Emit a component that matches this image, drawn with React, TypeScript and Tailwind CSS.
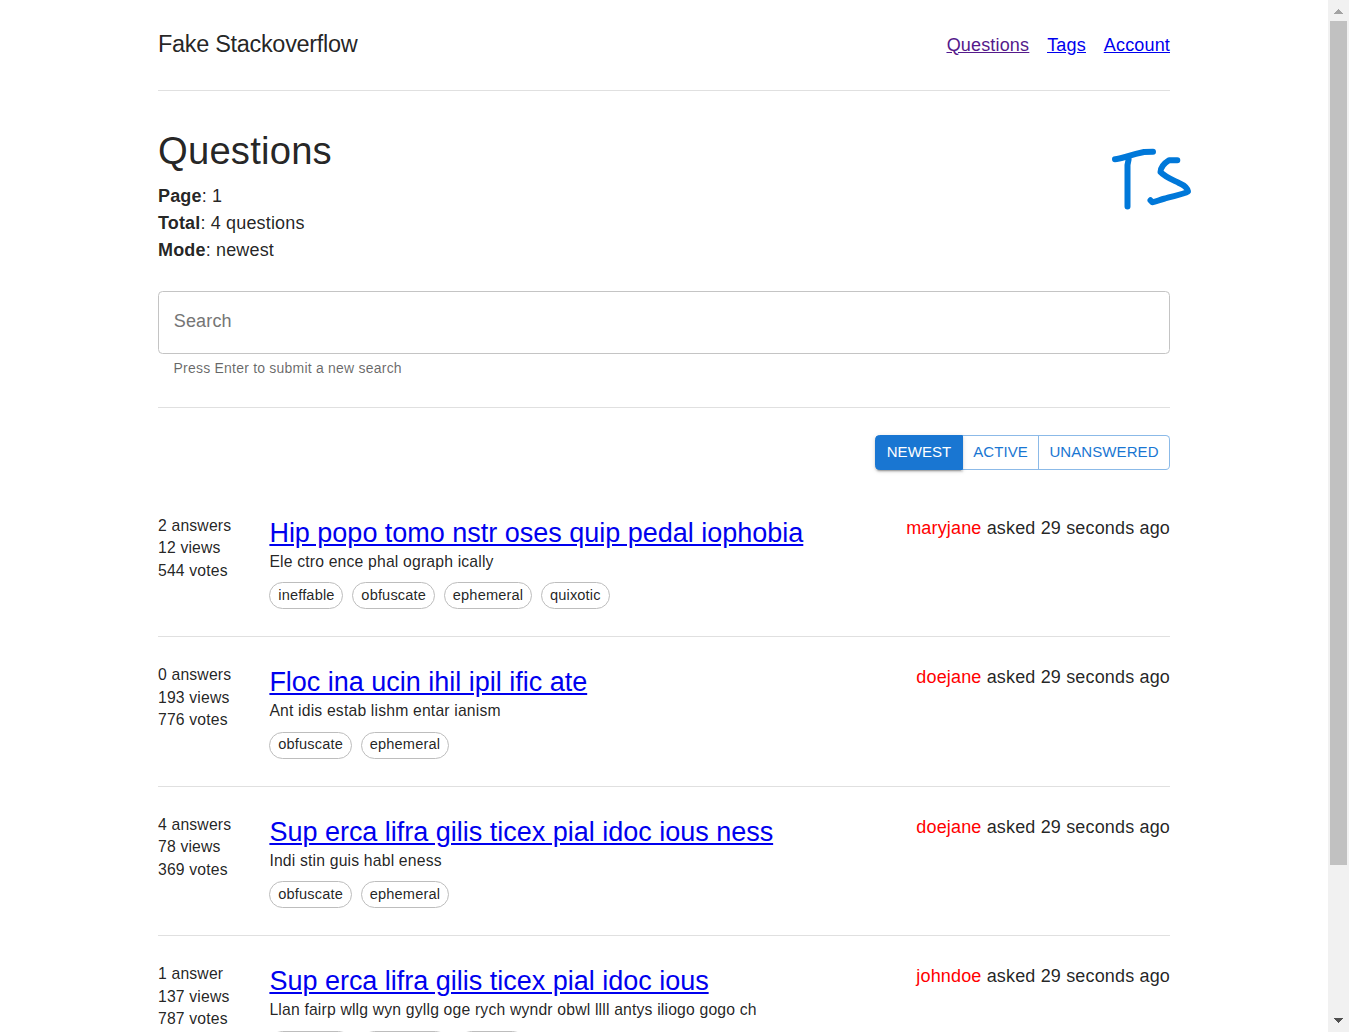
type Question = {
  stats: string[];
  title: string;
  teaser: string;
  tags: string[];
  author: string;
};

const questions: Question[] = [
  {
    stats: ["2 answers", "12 views", "544 votes"],
    title: "Hip popo tomo nstr oses quip pedal iophobia",
    teaser: "Ele ctro ence phal ograph ically",
    tags: ["ineffable", "obfuscate", "ephemeral", "quixotic"],
    author: "maryjane",
  },
  {
    stats: ["0 answers", "193 views", "776 votes"],
    title: "Floc ina ucin ihil ipil ific ate",
    teaser: "Ant idis estab lishm entar ianism",
    tags: ["obfuscate", "ephemeral"],
    author: "doejane",
  },
  {
    stats: ["4 answers", "78 views", "369 votes"],
    title: "Sup erca lifra gilis ticex pial idoc ious ness",
    teaser: "Indi stin guis habl eness",
    tags: ["obfuscate", "ephemeral"],
    author: "doejane",
  },
  {
    stats: ["1 answer", "137 views", "787 votes"],
    title: "Sup erca lifra gilis ticex pial idoc ious",
    teaser: "Llan fairp wllg wyn gyllg oge rych wyndr obwl llll antys iliogo gogo ch",
    tags: ["obfuscate", "ephemeral", "quixotic"],
    author: "johndoe",
  },
];

function Header() {
  return (
    <header className="flex h-[91px] items-center justify-between border-b border-black/12">
      <div className="pb-[3px] text-[23.5px] leading-[36px] tracking-[-0.0135em]">Fake Stackoverflow</div>
      <nav className="flex gap-[18px] text-[#0000ee] underline">
        <a href="#" className="text-[#551a8b]">Questions</a>
        <a href="#">Tags</a>
        <a href="#">Account</a>
      </nav>
    </header>
  );
}

function Meta({ label, value }: { label: string; value: string }) {
  return (
    <div>
      <b>{label}</b>: {value}
    </div>
  );
}

function Logo() {
  return (
    <svg
      viewBox="0 0 90 70"
      className="absolute top-[145px] left-[1107px] h-[70px] w-[90px]"
      fill="none"
      stroke="#0078d9"
      strokeWidth="6"
      strokeLinecap="round"
      strokeLinejoin="round"
    >
      <path d="M8 14.2C14 14 22 10 37 7L46 6.8" />
      <path d="M21.6 14.5L20.5 20V61.5" />
      <path d="M70.3 15.2H62C57.5 18 53.7 21 53.5 27C58 32 66 35 72 38C77 40.2 80.5 43 81 46.5C76 49.5 67 50.8 58 53.5C53 54.5 49 57 45.5 57.2L43.5 55.3" />
    </svg>
  );
}

function QuestionRow({ q }: { q: Question }) {
  return (
    <article className="mb-[27px] flex h-[122.5px] items-start border-b border-black/12">
      <div className="w-[111.4px] shrink-0 text-[15.75px] leading-[22.5px] tracking-[0.01071em]">
        {q.stats.map((s) => (
          <div key={s}>{s}</div>
        ))}
      </div>
      <div className="min-w-0 flex-1">
        <h2 className="text-[27px] leading-[36px] tracking-[-0.0004em]">
          <a href="#" className="text-[#0000ee] underline">{q.title}</a>
        </h2>
        <p className="text-[15.75px] leading-[22.5px] tracking-[0.01071em]">{q.teaser}</p>
        <div className="mt-[9px] flex gap-[9px]">
          {q.tags.map((t) => (
            <span
              key={t}
              className="flex h-[27px] items-center rounded-full border border-[#bdbdbd] px-[7.9px] pb-px text-[14.625px] tracking-[0.01em]"
            >
              {t}
            </span>
          ))}
        </div>
      </div>
      <div>
        <span className="text-[#ff0000]">{q.author}</span> asked 29 seconds ago
      </div>
    </article>
  );
}

function Scrollbar() {
  return (
    <div className="flex w-[21px] shrink-0 flex-col items-center bg-[#f1f1f1]">
      <div className="flex h-[21px] items-center justify-center pt-[2px]">
        <svg width="9" height="5" fill="#a3a3a3" shapeRendering="crispEdges">
          <path d="M0 5L4.5 0L9 5Z" />
        </svg>
      </div>
      <div className="h-[844px] w-[17px] bg-[#c1c1c1]" />
      <div className="mt-auto flex h-[21px] items-center justify-center pb-[2px]">
        <svg width="9" height="5" fill="#505050" shapeRendering="crispEdges">
          <path d="M0 0L4.5 5L9 0Z" />
        </svg>
      </div>
    </div>
  );
}

export default function App() {
  return (
    <div className="relative flex h-[1032px] w-[1349px] overflow-hidden bg-white font-['Liberation_Sans',Arial,sans-serif] text-[18px] leading-[27px] tracking-[0.0088em] text-black/87">
      <div className="h-full flex-1 overflow-hidden pr-[158px] pl-[158px]">
        <Header />
        <main>
          <h1 className="mt-[36px] text-[38.25px] leading-[47.25px] tracking-[0.005em]">Questions</h1>
          <div className="mt-[8.75px]">
            <Meta label="Page" value="1" />
            <Meta label="Total" value="4 questions" />
            <Meta label="Mode" value="newest" />
          </div>
          <div className="mt-[27px] h-[63px] rounded-[4.5px] border border-[#c4c4c4]">
            <input
              placeholder="Search"
              className="block h-[58px] w-full bg-transparent px-[14.75px] tracking-[0.00938em] outline-none placeholder:text-[#757575]"
            />
          </div>
          <p className="mt-[3px] px-[15.5px] text-[14px] leading-[22.5px] tracking-[0.0155em] text-black/60">
            Press Enter to submit a new search
          </p>
          <div className="mt-[27.5px] h-px bg-black/12" />
          <div className="mt-[27px] flex h-[35px] justify-end text-[15px] leading-[32px] tracking-[0.006em] text-[#1976d2]">
            <button className="flex w-[88px] justify-center rounded-l-[4.5px] border border-[#1976d2] bg-[#1976d2] text-white shadow-[0_3px_1px_-2px_rgba(0,0,0,0.2),0_2px_2px_0_rgba(0,0,0,0.14),0_1px_5px_0_rgba(0,0,0,0.12)]">
              NEWEST
            </button>
            <button className="flex w-[76px] justify-center border-y border-r border-[#1976d2]/50">ACTIVE</button>
            <button className="flex w-[131px] justify-center rounded-r-[4.5px] border-y border-r border-[#1976d2]/50">UNANSWERED</button>
          </div>
          <section className="mt-[44.6px]">
            {questions.map((q) => (
              <QuestionRow key={q.title} q={q} />
            ))}
          </section>
        </main>
      </div>
      <Scrollbar />
      <Logo />
    </div>
  );
}
